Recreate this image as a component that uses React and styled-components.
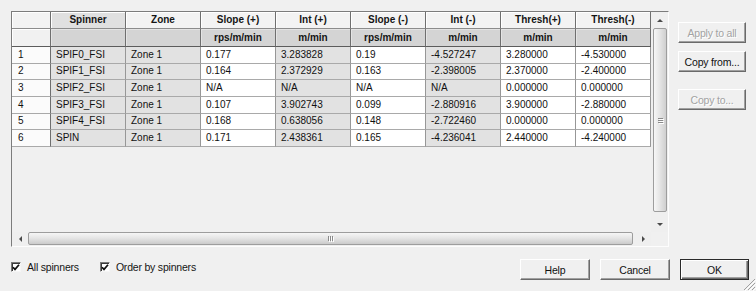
import React from "react";
import styled, { createGlobalStyle } from "styled-components";

const GlobalStyle = createGlobalStyle`
  html, body {
    margin: 0;
    padding: 0;
  }
  body {
    background: #f0f0f0;
    font-family: "Liberation Sans", Arial, sans-serif;
    font-size: 10px;
    color: #111;
  }
`;

const columns = [
  { title: "Spinner", unit: "", shaded: true, active: true },
  { title: "Zone", unit: "", shaded: true },
  { title: "Slope (+)", unit: "rps/m/min" },
  { title: "Int (+)", unit: "m/min", shaded: true },
  { title: "Slope (-)", unit: "rps/m/min" },
  { title: "Int (-)", unit: "m/min", shaded: true },
  { title: "Thresh(+)", unit: "m/min" },
  { title: "Thresh(-)", unit: "m/min" },
];

const rows = [
  ["SPIF0_FSI", "Zone 1", "0.177", "3.283828", "0.19", "-4.527247", "3.280000", "-4.530000"],
  ["SPIF1_FSI", "Zone 1", "0.164", "2.372929", "0.163", "-2.398005", "2.370000", "-2.400000"],
  ["SPIF2_FSI", "Zone 1", "N/A", "N/A", "N/A", "N/A", "0.000000", "0.000000"],
  ["SPIF3_FSI", "Zone 1", "0.107", "3.902743", "0.099", "-2.880916", "3.900000", "-2.880000"],
  ["SPIF4_FSI", "Zone 1", "0.168", "0.638056", "0.148", "-2.722460", "0.000000", "0.000000"],
  ["SPIN", "Zone 1", "0.171", "2.438361", "0.165", "-4.236041", "2.440000", "-4.240000"],
];

const Dialog = styled.div`
  position: relative;
  width: 756px;
  height: 291px;
  box-sizing: border-box;
  padding: 11px 7px 0 11px;
  display: grid;
  grid-template-columns: 658px 1fr;
  grid-template-rows: 236px auto;
  column-gap: 9px;
  overflow: hidden;
`;

const GridPanel = styled.div`
  display: grid;
  grid-template-columns: 639px 17px;
  grid-template-rows: 220px 14px;
  border: 1px solid;
  border-color: #7c7c7c #fdfdfd #fdfdfd #7c7c7c;
  background: #f0f0f0;
`;

const Sheet = styled.div`
  overflow: hidden;
`;

const Table = styled.div`
  display: grid;
  grid-template-columns: 39px repeat(8, 75px);
  grid-template-rows: 17px 18px repeat(6, 16.67px);
`;

const Cell = styled.div`
  box-sizing: border-box;
  display: flex;
  align-items: center;
  padding: 0 5px;
  border-right: 1px solid #979797;
  border-bottom: 1px solid #a9a9a9;
  background: ${(p) => (p.$shaded ? "#e2e2e2" : "#ffffff")};
  white-space: nowrap;
  overflow: hidden;
  line-height: 1;
`;

const RowHead = styled(Cell)`
  padding-left: 6px;
  background: #fbfbfb;
  border-right-color: #6e6e6e;
`;

const HeadCell = styled.div`
  box-sizing: border-box;
  display: flex;
  align-items: center;
  justify-content: center;
  font-weight: bold;
  line-height: 1;
  white-space: nowrap;
  color: #151515;
  background: ${(p) => (p.$active ? "#e0e0e0" : "#f3f3f3")};
  border-right: 1px solid #6f6f6f;
  border-bottom: 1px solid #8c8c8c;
  box-shadow: inset 1px 1px 0 #ffffff;
`;

const UnitCell = styled(HeadCell)`
  background: ${(p) => (p.$corner ? "#f1f1f1" : "#d4d4d4")};
  border-bottom-color: #5c5c5c;
  box-shadow: inset 1px 1px 0 ${(p) => (p.$corner ? "#ffffff" : "#e4e4e4")};
`;

const VScroll = styled.div`
  display: flex;
  flex-direction: column;
  align-items: stretch;
  background: #efefef;
`;

const HScroll = styled.div`
  display: flex;
  align-items: stretch;
  background: #efefef;
`;

const ScrollCorner = styled.div`
  background: #f0f0f0;
`;

const ArrowBox = styled.div`
  flex: 0 0 16px;
  display: flex;
  align-items: center;
  justify-content: center;
`;

const Arrow = styled.span`
  width: 0;
  height: 0;
  border-style: solid;
  border-color: transparent;
  ${(p) =>
    p.$dir === "up"
      ? "border-width: 0 3px 3px 3px; border-bottom-color: #4a4a4a;"
      : p.$dir === "down"
      ? "border-width: 3px 3px 0 3px; border-top-color: #4a4a4a;"
      : p.$dir === "left"
      ? "border-width: 3px 3px 3px 0; border-right-color: #4a4a4a;"
      : "border-width: 3px 0 3px 3px; border-left-color: #4a4a4a;"}
`;

const VThumb = styled.div`
  flex: 0 0 184px;
  box-sizing: border-box;
  margin: 0 1px 0 2px;
  border: 1px solid #9d9d9d;
  border-radius: 2px;
  background: linear-gradient(to right, #f6f6f6, #e6e6e6 45%, #cfcfcf);
  display: flex;
  align-items: center;
  justify-content: center;
`;

const HThumb = styled.div`
  flex: 0 0 605px;
  box-sizing: border-box;
  margin: 0 0 1px 0;
  border: 1px solid #9d9d9d;
  border-radius: 2px;
  background: linear-gradient(to bottom, #f6f6f6, #e6e6e6 45%, #cbcbcb);
  display: flex;
  align-items: center;
  justify-content: center;
`;

const Spacer = styled.div`
  flex: 1;
`;

const Grip = styled.span`
  display: flex;
  flex-direction: ${(p) => (p.$vertical ? "column" : "row")};
  gap: 1px;

  & > i {
    display: block;
    background: #8a8a8a;
    box-shadow: 1px 1px 0 #ffffff;
    width: ${(p) => (p.$vertical ? "5px" : "1px")};
    height: ${(p) => (p.$vertical ? "1px" : "5px")};
  }
`;

const SideButtons = styled.div`
  display: flex;
  flex-direction: column;
  align-items: flex-start;
  padding-top: 11px;
`;

const Button = styled.button`
  box-sizing: border-box;
  width: ${(p) => p.$w || 68}px;
  height: 21px;
  margin-top: ${(p) => p.$gap || 0}px;
  padding: 0;
  font-family: "Liberation Sans", Arial, sans-serif;
  font-size: 10.5px;
  letter-spacing: -0.2px;
  color: #111;
  background: #f0f0f0;
  border: 1px solid;
  border-color: #ffffff #6a6a6a #6a6a6a #ffffff;
  box-shadow: inset -1px -1px 0 #a0a0a0;
  ${(p) =>
    p.$primary &&
    `
    border-color: #2a2a2a;
    box-shadow: inset 1px 1px 0 #ffffff, inset -1px -1px 0 #6a6a6a, inset -2px -2px 0 #a0a0a0;
  `}

  &:disabled {
    color: #a3a3a3;
    text-shadow: 1px 1px 0 #ffffff;
  }
`;

const Footer = styled.div`
  grid-column: 1 / -1;
  display: flex;
  justify-content: space-between;
  align-items: flex-start;
  margin-top: 12px;
`;

const Checks = styled.div`
  display: flex;
  align-items: center;
  gap: 21px;
  padding-top: 2px;
`;

const CheckLabel = styled.label`
  display: flex;
  align-items: center;
  gap: 6px;
  font-size: 10.5px;
  letter-spacing: -0.2px;
  line-height: 12px;
  color: #151515;
`;

const Box = styled.span`
  box-sizing: border-box;
  width: 10px;
  height: 10px;
  display: flex;
  align-items: center;
  justify-content: center;
  background: #ffffff;
  border: 1px solid;
  border-color: #7a7a7a #f6f6f6 #f6f6f6 #7a7a7a;
  box-shadow: inset 1px 1px 0 #3a3a3a;
`;

const ButtonRow = styled.div`
  display: flex;
  gap: 10px;
`;

const ResizeGrip = styled.svg`
  position: absolute;
  right: 0;
  bottom: 0;
`;

const CheckBox = ({ label }) => (
  <CheckLabel>
    <Box>
      <svg width="8" height="7" viewBox="0 0 8 7">
        <polyline points="1,3.2 3,5.4 7,0.8" fill="none" stroke="#111" strokeWidth="1.7" />
      </svg>
    </Box>
    {label}
  </CheckLabel>
);

const DataGrid = () => (
  <Table>
    <HeadCell />
    {columns.map((c) => (
      <HeadCell key={c.title} $active={c.active}>
        {c.title}
      </HeadCell>
    ))}
    <UnitCell $corner />
    {columns.map((c) => (
      <UnitCell key={c.title}>{c.unit}</UnitCell>
    ))}
    {rows.map((r, i) => (
      <React.Fragment key={i}>
        <RowHead>{i + 1}</RowHead>
        {r.map((v, j) => (
          <Cell key={j} $shaded={columns[j].shaded}>
            {v}
          </Cell>
        ))}
      </React.Fragment>
    ))}
  </Table>
);

export default function App() {
  return (
    <>
      <GlobalStyle />
      <Dialog>
        <GridPanel>
          <Sheet>
            <DataGrid />
          </Sheet>
          <VScroll>
            <ArrowBox>
              <Arrow $dir="up" />
            </ArrowBox>
            <VThumb>
              <Grip $vertical>
                <i />
                <i />
                <i />
              </Grip>
            </VThumb>
            <Spacer />
            <ArrowBox>
              <Arrow $dir="down" />
            </ArrowBox>
          </VScroll>
          <HScroll>
            <ArrowBox>
              <Arrow $dir="left" />
            </ArrowBox>
            <HThumb>
              <Grip>
                <i />
                <i />
                <i />
              </Grip>
            </HThumb>
            <Spacer />
            <ArrowBox>
              <Arrow $dir="right" />
            </ArrowBox>
          </HScroll>
          <ScrollCorner />
        </GridPanel>

        <SideButtons>
          <Button disabled>Apply to all</Button>
          <Button $gap={8}>Copy from...</Button>
          <Button $gap={17} disabled>
            Copy to...
          </Button>
        </SideButtons>

        <Footer>
          <Checks>
            <CheckBox label="All spinners" />
            <CheckBox label="Order by spinners" />
          </Checks>
          <ButtonRow>
            <Button $w={70}>Help</Button>
            <Button $w={70}>Cancel</Button>
            <Button $w={69} $primary>
              OK
            </Button>
          </ButtonRow>
        </Footer>

        <ResizeGrip width="14" height="14" viewBox="0 0 14 14">
          <g strokeWidth="1">
            <line x1="13" y1="2" x2="2" y2="13" stroke="#a0a0a0" />
            <line x1="14" y1="3" x2="3" y2="14" stroke="#ffffff" />
            <line x1="13" y1="6" x2="6" y2="13" stroke="#a0a0a0" />
            <line x1="14" y1="7" x2="7" y2="14" stroke="#ffffff" />
            <line x1="13" y1="10" x2="10" y2="13" stroke="#a0a0a0" />
            <line x1="14" y1="11" x2="11" y2="14" stroke="#ffffff" />
          </g>
        </ResizeGrip>
      </Dialog>
    </>
  );
}
